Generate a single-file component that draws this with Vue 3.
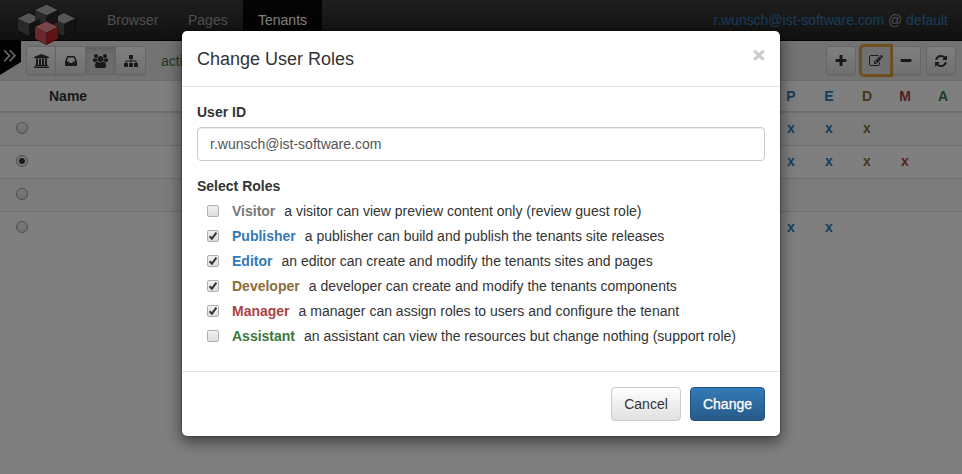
<script setup>
const nav = [
  { label: 'Browser', cls: 'n-browser' },
  { label: 'Pages', cls: 'n-pages' },
  { label: 'Tenants', cls: 'n-tenants active' }
]
const icons = {
  university: { box: '0 0 1920 1792', d: 'M960 0l960 384v128h-128q0 26-20.5 45t-48.5 19h-1526q-28 0-48.5-19t-20.5-45h-128v-128zm-704 640h256v768h128v-768h256v768h128v-768h256v768h128v-768h256v768h59q28 0 48.5 19t20.5 45v64h-1664v-64q0-26 20.5-45t48.5-19h59v-768zm1595 960q28 0 48.5 19t20.5 45v128h-1920v-128q0-26 20.5-45t48.5-19h1782z' },
  inbox: { box: '0 0 1792 1792', d: 'M1151 960h316q-1-3-2.5-8.5t-2.5-7.5l-212-496h-708l-212 496q-1 3-2.5 8.5t-2.5 7.5h316l95 192h320zm513 30v482q0 26-19 45t-45 19h-1408q-26 0-45-19t-19-45v-482q0-62 25-123l238-552q10-25 36.5-42t52.5-17h832q26 0 52.5 17t36.5 42l238 552q25 61 25 123z' },
  users: { box: '0 0 1920 1792', d: 'M593 896q-162 5-265 128h-134q-82 0-138-40.5t-56-118.5q0-353 124-353 6 0 43.5 21t97.5 42.5 119 21.5q67 0 133-23-5 37-5 66 0 139 81 256zm1071 637q0 120-73 189.5t-194 69.5h-874q-121 0-194-69.5t-73-189.5q0-53 3.5-103.5t14-109 26.5-108.5 43-97.5 62-81 85.5-53.5 111.5-20q10 0 43 21.5t73 48 107 48 135 21.5 135-21.5 107-48 73-48 43-21.5q61 0 111.5 20t85.5 53.5 62 81 43 97.5 26.5 108.5 14 109 3.5 103.5zm-1024-1277q0 106-75 181t-181 75-181-75-75-181 75-181 181-75 181 75 75 181zm704 384q0 159-112.5 271.5t-271.5 112.5-271.5-112.5-112.5-271.5 112.5-271.5 271.5-112.5 271.5 112.5 112.5 271.5zm576 225q0 78-56 118.5t-138 40.5h-134q-103-123-265-128 81-117 81-256 0-29-5-66 66 23 133 23 59 0 119-21.5t97.5-42.5 43.5-21q124 0 124 353zm-128-609q0 106-75 181t-181 75-181-75-75-181 75-181 181-75 181 75 75 181z' },
  sitemap: { box: '0 0 1792 1792', d: 'M1792 1248v320q0 40-28 68t-68 28h-320q-40 0-68-28t-28-68v-320q0-40 28-68t68-28h96v-192h-512v192h96q40 0 68 28t28 68v320q0 40-28 68t-68 28h-320q-40 0-68-28t-28-68v-320q0-40 28-68t68-28h96v-192h-512v192h96q40 0 68 28t28 68v320q0 40-28 68t-68 28h-320q-40 0-68-28t-28-68v-320q0-40 28-68t68-28h96v-192q0-52 38-90t90-38h512v-192h-96q-40 0-68-28t-28-68v-320q0-40 28-68t68-28h320q40 0 68 28t28 68v320q0 40-28 68t-68 28h-96v192h512q52 0 90 38t38 90v192h96q40 0 68 28t28 68z' },
  plus: { box: '0 0 1792 1792', d: 'M1600 736v192q0 40-28 68t-68 28h-416v416q0 40-28 68t-68 28h-192q-40 0-68-28t-28-68v-416h-416q-40 0-68-28t-28-68v-192q0-40 28-68t68-28h416v-416q0-40 28-68t68-28h192q40 0 68 28t28 68v416h416q40 0 68 28t28 68z' },
  edit: { box: '0 0 1792 1792', d: 'M888 1184l116-116-152-152-116 116v56h96v96h56zm440-720q-16-16-33 1l-350 350q-17 17-1 33t33-1l350-350q17-17 1-33zm80 594v190q0 119-84.5 203.5t-203.5 84.5h-832q-119 0-203.5-84.5t-84.5-203.5v-832q0-119 84.5-203.5t203.5-84.5h832q63 0 117 25 15 7 18 23 3 17-9 29l-49 49q-14 14-32 8-23-6-45-6h-832q-66 0-113 47t-47 113v832q0 66 47 113t113 47h832q66 0 113-47t47-113v-126q0-13 9-22l64-64q15-15 35-7t20 29zm-96-738l288 288-672 672h-288v-288zm444 132l-92 92-288-288 92-92q28-28 68-28t68 28l152 152q28 28 28 68t-28 68z' },
  minus: { box: '0 0 1792 1792', d: 'M1600 736v192q0 40-28 68t-68 28h-1216q-40 0-68-28t-28-68v-192q0-40 28-68t68-28h1216q40 0 68 28t28 68z' },
  refresh: { box: '0 0 1792 1792', d: 'M1639 1056q0 5-1 7-64 268-268 434.5t-478 166.5q-146 0-282.5-55t-243.5-157l-129 129q-19 19-45 19t-45-19-19-45v-448q0-26 19-45t45-19h448q26 0 45 19t19 45-19 45l-137 137q71 66 161 102t187 36q134 0 250-65t186-179q11-17 53-117 8-23 30-23h192q13 0 22.5 9.5t9.5 22.5zm25-800v448q0 26-19 45t-45 19h-448q-26 0-45-19t-19-45 19-45l138-138q-148-137-349-137-134 0-250 65t-186 179q-11 17-53 117-8 23-30 23h-199q-13 0-22.5-9.5t-9.5-22.5v-7q65-268 270-434.5t480-166.5q146 0 284 55.5t245 156.5l130-129q19-19 45-19t45 19 19 45z' }
}
const views = [
  { icon: 'university' },
  { icon: 'inbox' },
  { icon: 'users', active: true },
  { icon: 'sitemap' }
]
const edits = [{ icon: 'edit', focus: true }, { icon: 'minus' }]
const columns = [
  { key: 'P', cls: 'blue' },
  { key: 'E', cls: 'blue' },
  { key: 'D', cls: 'brown' },
  { key: 'M', cls: 'red' },
  { key: 'A', cls: 'green' }
]
const rows = [
  { roles: 'PED', selected: false },
  { roles: 'PEDM', selected: true },
  { roles: '', selected: false },
  { roles: 'PE', selected: false }
]
const roles = [
  { name: 'Visitor', cls: 'grey', on: false, text: 'a visitor can view preview content only (review guest role)' },
  { name: 'Publisher', cls: 'blue', on: true, text: 'a publisher can build and publish the tenants site releases' },
  { name: 'Editor', cls: 'blue', on: true, text: 'an editor can create and modify the tenants sites and pages' },
  { name: 'Developer', cls: 'brown', on: true, text: 'a developer can create and modify the tenants components' },
  { name: 'Manager', cls: 'red', on: true, text: 'a manager can assign roles to users and configure the tenant' },
  { name: 'Assistant', cls: 'green', on: false, text: 'an assistant can view the resources but change nothing (support role)' }
]
</script>

<template>
  <div class="page">
    <header class="navbar">
      <svg class="logo" width="60" height="46" viewBox="0 0 60 46">
        <g stroke="#000" stroke-width=".9">
          <path d="M29.500 4.500L41 10v12l-11.500 5.500L18 22V10z" />
          <path d="M12 13l11.500 5.500v12L12 36 .5 30.500v-12z" />
          <path d="M47 13l11.500 5.500v12L47 36l-11.500-5.500v-12z" />
        </g>
        <path fill="#acacac" d="M29.500 4.500L41 10l-11.500 5.500L18 10zM12 13l11.500 5.500L12 24 .5 18.500zM47 13l11.500 5.500L47 24l-11.500-5.500z" />
        <path fill="#525252" d="M18 10l11.500 5.500v12L18 22zM.5 18.500L12 24v12L.5 30.500zM35.500 18.500L47 24v12l-11.500-5.500z" />
        <path fill="#262626" d="M41 10l-11.500 5.500v12L41 22zM23.500 18.500L12 24v12l11.500-5.500zM58.500 18.500L47 24v12l11.500-5.500z" />
        <path stroke="#300" stroke-width=".9" d="M29.500 21.500L41 27v11.500l-11.500 6-11.500-6V27z" />
        <path fill="#f08c90" d="M29.500 21.500L41 27l-11.500 5.500L18 27z" />
        <path fill="#d4555b" d="M18 27l11.500 5.500v12L18 38.500z" />
        <path fill="#c0242a" d="M41 27l-11.500 5.500v12L41 38.500z" />
      </svg>
      <nav class="links">
        <a v-for="n in nav" :key="n.label" :class="n.cls"><span>{{ n.label }}</span></a>
      </nav>
      <div class="user"><a>r.wunsch@ist-software.com</a> @ <a>default</a></div>
    </header>

    <div class="toolbar">
      <svg class="handle" width="21" height="35" viewBox="0 0 21 35">
        <path fill="#040404" d="M0 0h21v21L0 34z" />
        <path fill="none" stroke="#ddd" stroke-width="1.600" d="M4.200 9.300l5.200 5.500-5.200 5.500M9.700 9.300l5.200 5.500-5.200 5.500" />
      </svg>
      <div class="group">
        <button v-for="b in views" :key="b.icon" :class="{ active: b.active }">
          <svg :viewBox="icons[b.icon].box" :class="b.icon"><path :d="icons[b.icon].d" /></svg>
        </button>
      </div>
      <span class="path">active</span>
      <div class="group right">
        <button><svg :viewBox="icons.plus.box"><path :d="icons.plus.d" /></svg></button>
      </div>
      <div class="group pair">
        <button v-for="b in edits" :key="b.icon" :class="{ focus: b.focus }">
          <svg :viewBox="icons[b.icon].box" :class="b.icon"><path :d="icons[b.icon].d" /></svg>
        </button>
      </div>
      <div class="group">
        <button><svg :viewBox="icons.refresh.box"><path :d="icons.refresh.d" /></svg></button>
      </div>
    </div>

    <div class="table">
      <div class="tr head">
        <b class="name">Name</b>
        <b v-for="c in columns" :key="c.key" class="cell" :class="c.cls">{{ c.key }}</b>
      </div>
      <div v-for="(r, i) in rows" :key="i" class="tr">
        <span class="name"><i class="radio" :class="{ on: r.selected }"></i></span>
        <b v-for="c in columns" :key="c.key" class="cell" :class="c.cls">{{ r.roles.includes(c.key) ? 'x' : '' }}</b>
      </div>
    </div>

    <div class="backdrop">
      <section class="modal">
        <div class="m-head"><h4>Change User Roles</h4><span class="close">×</span></div>
        <div class="m-body">
          <b class="label">User ID</b>
          <div class="input">r.wunsch@ist-software.com</div>
          <b class="label second">Select Roles</b>
          <div v-for="r in roles" :key="r.name" class="role">
            <svg class="check" width="12" height="12" viewBox="0 0 12 12">
              <defs><linearGradient id="boxfill" x2="0" y2="1"><stop stop-color="#f2f2f2" /><stop offset="1" stop-color="#dcdcdc" /></linearGradient></defs>
              <rect x=".5" y=".5" width="11" height="11" rx="1.500" fill="url(#boxfill)" stroke="#b0b0b0" />
              <path v-if="r.on" d="M2.600 6.200l2.300 2.500 4.500-6" fill="none" stroke="#333" stroke-width="2" />
            </svg>
            <b :class="r.cls">{{ r.name }}</b>
            <span>{{ r.text }}</span>
          </div>
        </div>
        <div class="m-foot">
          <button class="btn cancel">Cancel</button>
          <button class="btn change">Change</button>
        </div>
      </section>
    </div>
  </div>
</template>

<style>
body { margin: 0; overflow: hidden; }
</style>

<style scoped>
* { box-sizing: border-box; }
.page { position: relative; width: 962px; height: 474px; background: #fff; overflow: hidden; font: 14px/20px "Liberation Sans", Arial, sans-serif; color: #333; }
button { font: inherit; margin: 0; padding: 0; }
.navbar { position: relative; z-index: 1; display: flex; height: 41px; background: linear-gradient(#3c3c3c, #222); border-bottom: 1px solid #080808; }
.logo { margin-left: 16.500px; flex: none; overflow: visible; }
.links { display: flex; margin-left: 15.500px; color: #9d9d9d; }
.links a { display: flex; align-items: center; padding: 0 15px; height: 40px; }
.n-browser { width: 81px; }
.n-pages { width: 70px; }
.n-tenants { width: 79px; }
.links .active { background: #080808; color: #fff; }
.user { margin: 10px 14px 0 auto; color: #9d9d9d; letter-spacing: -.02px; }
.user a { color: #337ab7; }
.toolbar { display: flex; height: 39px; background: #e7e7e7; padding-right: 6px; }
.handle { flex: none; margin-right: 5px; }
.group { display: flex; margin-top: 5px; height: 29px; }
.group button { position: relative; display: flex; align-items: center; justify-content: center; width: 31px; height: 29px; margin-left: -1px; border: 1px solid #ccc; background: linear-gradient(#fff, #e0e0e0); box-shadow: inset 0 1px 0 rgba(255,255,255,.15), 0 1px 1px rgba(0,0,0,.075); }
.group button:first-child { border-radius: 3px 0 0 3px; margin-left: 0; width: 30px; }
.group button:last-child { border-radius: 0 3px 3px 0; }
.group button:only-child { border-radius: 3px; }
.group .active { background: #dbdbdb; box-shadow: inset 0 3px 5px rgba(0,0,0,.125); }
.group .focus { z-index: 1; background: #e0e0e0; border-color: #e0a54c; box-shadow: 0 0 1px 2px #d99a35; }
.group svg { width: 14px; height: 14px; fill: #333; }
.group .university, .group .users { width: 15px; }
.path { margin: 10px 0 0 15px; color: #3c763d; }
.right { margin-left: auto; margin-right: 5px; }
.pair { margin-right: 5px; }
.table { border-top: 1px solid #ddd; }
.tr { display: flex; align-items: center; height: 33px; padding-bottom: 2px; border-bottom: 1px solid #ddd; }
.tr:nth-child(even) { background: #f9f9f9; }
.tr.head { height: 32px; padding-bottom: 0; border-bottom-width: 2px; }
.tr:last-child { border-color: transparent; }
.name { flex: 1; padding-left: 16px; }
.head .name { padding-left: 49px; }
.cell { width: 38px; text-align: center; }
.radio { display: block; width: 12px; height: 12px; border: 1px solid #999; border-radius: 50%; background: linear-gradient(#f5f5f5, #ddd); }
.radio.on { background: radial-gradient(circle, #333 0 2.500px, #e8e8e8 3.300px); }
.grey { color: #777; }
.blue { color: #337ab7; }
.brown { color: #8a6d3b; }
.red { color: #a94442; }
.green { color: #3c763d; }
.backdrop { position: absolute; z-index: 5; inset: 0; background: rgba(0,0,0,.5); padding: 30px 0 0 181px; }
.modal { width: 600px; height: 407px; background: #fff; background-clip: padding-box; border: 1px solid rgba(0,0,0,.2); border-radius: 6px; box-shadow: 0 5px 15px rgba(0,0,0,.5); }
.m-head { display: flex; justify-content: space-between; height: 56px; padding: 15px 15px 0; border-bottom: 1px solid #e5e5e5; }
h4 { margin: 0; font-size: 18px; line-height: 26px; font-weight: 400; }
.close { font-size: 21px; font-weight: 700; line-height: 21px; color: #ccc; margin-top: -2px; -webkit-text-stroke: .6px #ccc; }
.m-body { height: 284px; padding: 15px 15px 0; }
.label { display: block; height: 25px; }
.input { height: 34px; border: 1px solid #ccc; border-radius: 4px; box-shadow: inset 0 1px 1px rgba(0,0,0,.075); padding: 6px 12px; color: #555; }
.second { height: 22px; margin-top: 15px; }
.role { display: flex; align-items: center; height: 25px; padding-left: 10px; white-space: nowrap; }
.role b { margin-left: 13px; margin-right: 9px; }
.check { flex: none; }
.m-foot { display: flex; justify-content: flex-end; gap: 9px; border-top: 1px solid #e5e5e5; padding: 15px 15px; }
.btn { height: 34px; border-radius: 4px; border: 1px solid #ccc; }
.cancel { width: 70px; color: #333; background: linear-gradient(#fff, #e0e0e0); }
.change { width: 75px; color: #fff; border-color: #245580; background: linear-gradient(#337ab7, #265a88); text-shadow: 0 -1px 0 rgba(0,0,0,.2); -webkit-text-stroke: .3px #fff; }
</style>
